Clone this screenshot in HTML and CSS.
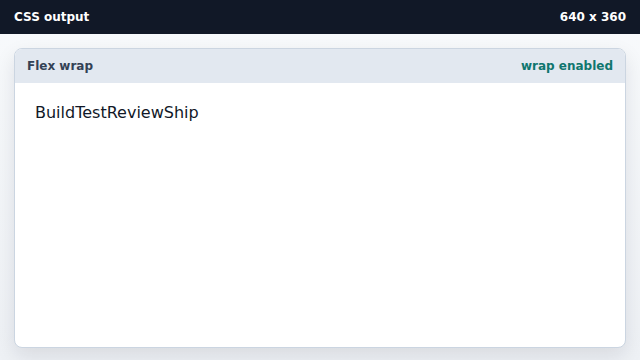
FILE: index.html
```html
<!DOCTYPE html>
<html lang="en">
<head>
  <meta charset="UTF-8">
  <meta name="viewport" content="width=device-width, initial-scale=1.0">
  <title>CSS output</title>
  <link rel="stylesheet" href="styles.css">
</head>
<body>
  <div class="topbar">
    <span>CSS output</span>
    <span>640 x 360</span>
  </div>

  <div class="stage">
    <div class="card">
      <div class="card-head">
        <span class="card-title">Flex wrap</span>
        <span class="card-status">wrap enabled</span>
      </div>
      <div class="card-body">
        <div class="items">
          <span>Build</span><span>Test</span><span>Review</span><span>Ship</span>
        </div>
      </div>
    </div>
  </div>
</body>
</html>
```

FILE: styles.css
```css
* {
  box-sizing: border-box;
}
html, body {
  height: 100%;
}
body {
  margin: 0;
  font-family: "DejaVu Sans", sans-serif;
  background: linear-gradient(#f8fafc, #eef1f5);
  color: #111827;
  display: flex;
  flex-direction: column;
}
.topbar {
  height: 34px;
  background-color: #111827;
  color: #ffffff;
  font-size: 12px;
  font-weight: bold;
  display: flex;
  align-items: center;
  justify-content: space-between;
  padding: 0 14px;
}
.stage {
  flex: 1;
  padding: 14px 14px 12px;
  display: flex;
}
.card {
  flex: 1;
  background-color: #ffffff;
  border: 1px solid #cbd5e1;
  border-radius: 8px;
  overflow: hidden;
  box-shadow: 0 8px 20px rgba(15, 23, 42, 0.1);
  display: flex;
  flex-direction: column;
}
.card-head {
  height: 34px;
  background-color: #e2e8f0;
  display: flex;
  align-items: center;
  justify-content: space-between;
  padding: 0 12px;
  font-size: 12px;
  font-weight: bold;
}
.card-title {
  color: #334155;
}
.card-status {
  color: #0f766e;
}
.card-body {
  flex: 1;
  padding: 20px 20px;
}
.items {
  display: flex;
  flex-wrap: wrap;
  font-size: 16px;
  color: #111827;
}
```
